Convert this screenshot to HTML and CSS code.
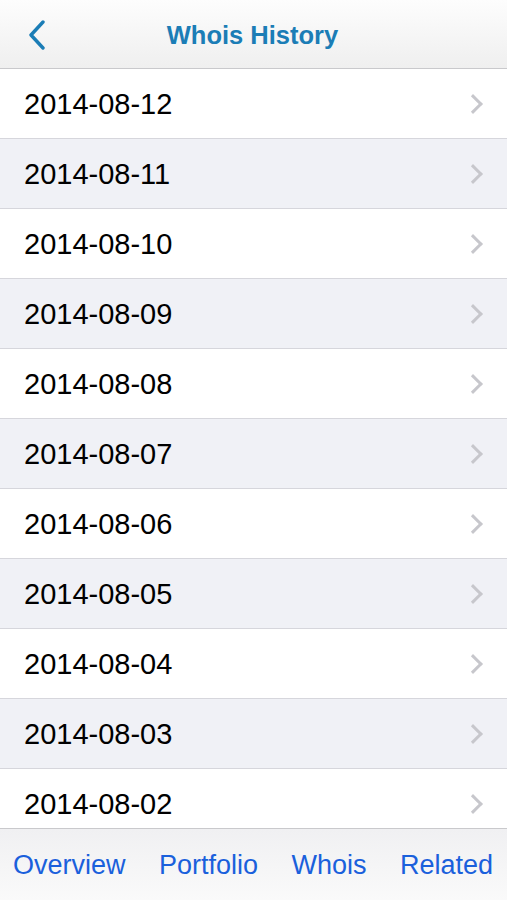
FILE: index.html
```html
<html>
  <head>
    <link rel="stylesheet" href="styles.css">
  </head>
  <body>
    <div class="screen">
      <div class="navbar">
        <svg class="back" width="20" height="30" viewBox="0 0 20 30">
          <path d="M16 2 L4 15 L16 28" fill="none" stroke="#1b7db6" stroke-width="3.4" stroke-linecap="round" stroke-linejoin="round"/>
        </svg>
        <div class="title">Whois History</div>
      </div>

      <ul class="history">
        <li>2014-08-12</li>
        <li class="alt">2014-08-11</li>
        <li>2014-08-10</li>
        <li class="alt">2014-08-09</li>
        <li>2014-08-08</li>
        <li class="alt">2014-08-07</li>
        <li>2014-08-06</li>
        <li class="alt">2014-08-05</li>
        <li>2014-08-04</li>
        <li class="alt">2014-08-03</li>
        <li>2014-08-02</li>
      </ul>

      <div class="tabbar">
        <span>Overview</span>
        <span>Portfolio</span>
        <span>Whois</span>
        <span>Related</span>
      </div>
    </div>
  </body>
</html>
```

FILE: styles.css
```css
body {
  margin: 0;
  font-family: 'Liberation Sans', Arial, sans-serif;
  background: #fff;
}

.screen {
  width: 507px;
  height: 900px;
  overflow: hidden;
  display: flex;
  flex-direction: column;
  position: relative;
}

.navbar {
  height: 68px;
  flex: none;
  border-bottom: 1px solid #c9c9cc;
  background: linear-gradient(#fdfdfd, #efefef);
  display: flex;
  align-items: center;
  justify-content: center;
  position: relative;
}

.back {
  position: absolute;
  left: 27px;
  top: 20px;
}

.title {
  color: #1b7db6;
  font-weight: bold;
  font-size: 25.5px;
  margin-left: -2px;
  padding-top: 2px;
}

.history {
  list-style: none;
  margin: 0;
  padding: 0;
}

.history li {
  border-bottom: 1px solid #d6d6dc;
  padding: 2px 24px 0 24px;
  box-sizing: border-box;
  height: 70px;
  display: flex;
  align-items: center;
  justify-content: space-between;
  font-size: 29px;
  color: #000;
}

.history li::after {
  content: "";
  width: 11px;
  height: 11px;
  border-top: 3px solid #c7c7cc;
  border-right: 3px solid #c7c7cc;
  transform: rotate(45deg);
  margin-right: 3px;
  margin-top: -2px;
}

.history li.alt {
  background: #f0f1f6;
}

.tabbar {
  position: absolute;
  left: 0;
  right: 0;
  bottom: 0;
  height: 70px;
  border-top: 1px solid #c9c9cc;
  background: linear-gradient(#f0f0f2, #fafafa);
  display: flex;
  align-items: center;
  justify-content: space-between;
  padding: 1px 14px 0 13px;
  font-size: 27px;
  color: #1a60dc;
}
```
